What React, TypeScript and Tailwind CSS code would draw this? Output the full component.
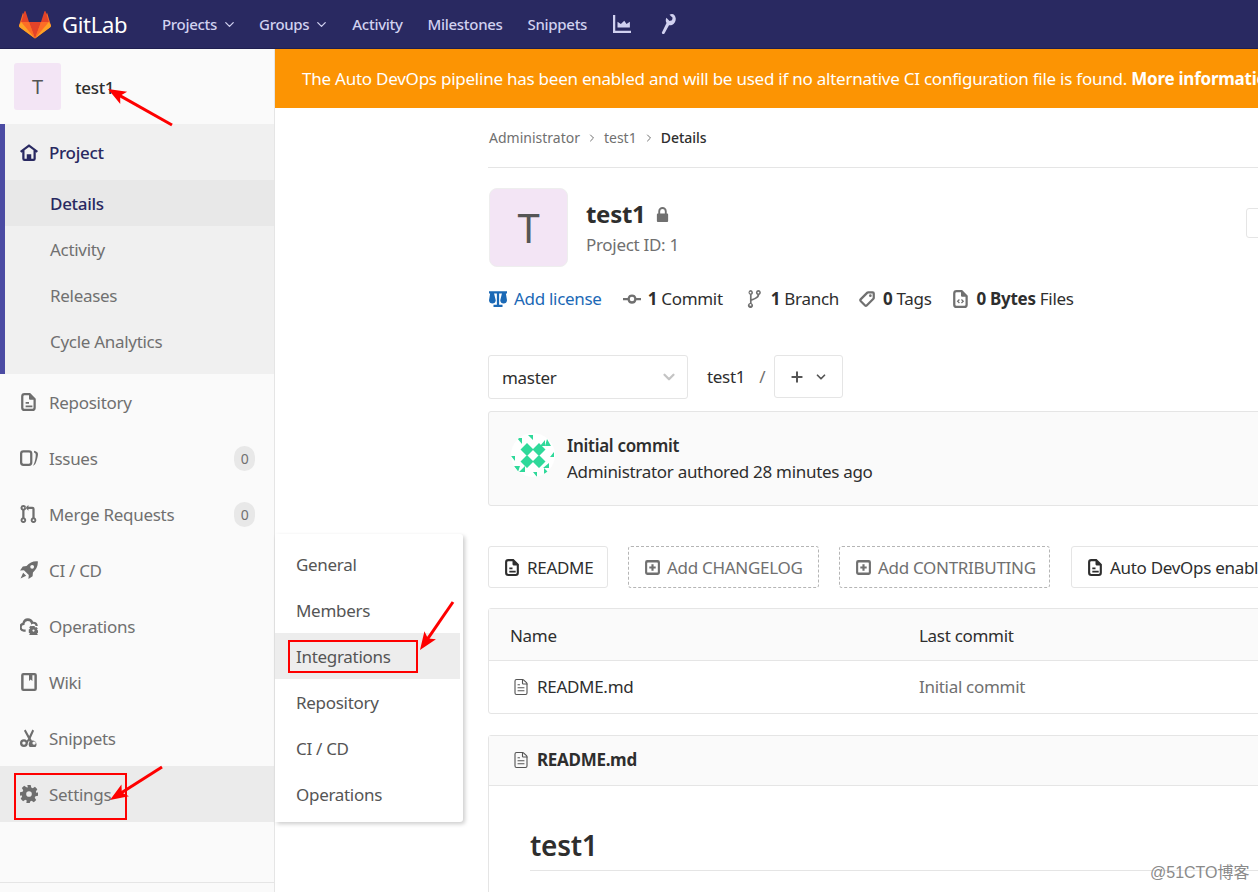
import { ReactNode } from 'react'
import { ChevronDown, ChevronRight, FileText, Plus } from 'lucide-react'

const font = "font-['Noto_Sans','Open_Sans',sans-serif]"

function Icon({ size = 16, className = '', children }: { size?: number; className?: string; children: ReactNode }) {
  return (
    <svg width={size} height={size} viewBox="0 0 16 16" fill="currentColor" fillRule="evenodd" className={`shrink-0 ${className}`}>
      {children}
    </svg>
  )
}

const DocIcon = () => (
  <path d="M4 0h5l5 5v8a3 3 0 0 1-3 3H4a3 3 0 0 1-3-3V3a3 3 0 0 1 3-3zm0 2a1 1 0 0 0-1 1v10a1 1 0 0 0 1 1h7a1 1 0 0 0 1-1V6H9a1 1 0 0 1-1-1V2H4zm1 6h3v1.600H5V8zm0 3h6v1.600H5V11z" />
)
const HomeIcon = () => (
  <path d="M8 1l8 6-1.200 1.600-.8-.6v6a2 2 0 0 1-2 2H4a2 2 0 0 1-2-2V8l-.8.6L0 7l8-6zM4 6.500V14h2v-4h4v4h2V6.500L8 3.500l-4 3z" />
)
const IssuesIcon = () => (
  <path d="M3 1h5a3 3 0 0 1 3 3v8a3 3 0 0 1-3 3H3a3 3 0 0 1-3-3V4a3 3 0 0 1 3-3zm0 2a1 1 0 0 0-1 1v8a1 1 0 0 0 1 1h5a1 1 0 0 0 1-1V4a1 1 0 0 0-1-1H3zm9.500-1.400c2 .3 3.500 1.400 3.500 2.900 0 2-1 5.500-2 8-.5 1.300-1.500 2-2.500 2.500.5-1 1-2 1.500-3.500.6-2 1-4.500 1-6.500 0-.8-.5-1.400-1.500-1.800V1.600z" />
)
const MergeIcon = () => (
  <path d="M3 0a2.500 2.500 0 0 1 1 4.800v6.400a2.500 2.500 0 1 1-2 0V4.800A2.500 2.500 0 0 1 3 0zm0 1.700a.8.8 0 1 0 0 1.600.8.8 0 0 0 0-1.600zm0 11a.8.800 0 1 0 0 1.600.8.8 0 0 0 0-1.600zM7.500 0v1.500H11a2 2 0 0 1 2 2v7.700a2.500 2.500 0 1 1-2 0V3.500H7.500V5L4.800 2.500 7.500 0zM12 12.700a.8.8 0 1 0 0 1.600.8.8 0 0 0 0-1.600z" />
)
const RocketIcon = () => (
  <path d="M15.800.2c.4 4-1.300 7.400-4.300 10l-.3 3.300L7.500 16l.3-3.500L3.500 8.200 0 8.500 2.500 4.800l3.300-.3C8.400 1.500 11.800-.2 15.800.2zM10.800 3.500a1.700 1.700 0 1 0 0 3.400 1.700 1.700 0 0 0 0-3.400zM2.800 10.500l2.700 2.700L.5 15.500l2.300-5z" />
)
const CloudGearIcon = () => (
  <path d="M7 1a5 5 0 0 1 4.700 3.300A4 4 0 0 1 15.800 8h-2a2 2 0 0 0-3-1.700L10 6.800l-.2-1A3 3 0 0 0 4 6v1h-.5a2 2 0 0 0 0 4H5v2H3.500a4 4 0 0 1-1.300-7.800A5 5 0 0 1 7 1zm4 7h2l.3 1.300 1.200-.5 1.300 1.400-.7 1.200 1.100.6v1.900l-1.100.5.700 1.200-1.300 1.400-1.200-.6-.3 1.100h-2l-.3-1.100-1.200.6-1.300-1.400.7-1.200-1.100-.5V11l1.100-.6-.7-1.200 1.300-1.400 1.200.5L11 8zm1 3a1 1 0 1 0 0 2 1 1 0 0 0 0-2z" />
)
const WikiIcon = () => (
  <path d="M3 0h10a2 2 0 0 1 2 2v12a2 2 0 0 1-2 2H3a2 2 0 0 1-2-2V2a2 2 0 0 1 2-2zm.200 2v12h9.600V2H11v5L9.500 5.800 8 7V2H3.200z" />
)
const ScissorsIcon = () => (
  <path d="M3.500 9a3.500 3.500 0 0 1 2.600 1.200l1.200-1.500L3.500 1.500 5 .5l3.200 5.800L11 .5l1.500 1-3 6.800 1 1.900a3.500 3.500 0 1 1-2 1.200L8 10.300 7 12.500A3.500 3.500 0 1 1 3.500 9zm0 2a1.500 1.500 0 1 0 0 3 1.500 1.500 0 0 0 0-3zm9 0a1.500 1.500 0 1 0 0 3 1.500 1.500 0 0 0 0-3z" />
)
const GearIcon = () => (
  <path d="M6.500 0h3l.5 2.300 1.300.6 2-1.300 2.100 2.100-1.300 2 .6 1.300L16 6.500v3l-2.300.5-.6 1.300 1.300 2-2.100 2.100-2-1.300-1.300.6-.5 2.300h-3L6 13.700l-1.300-.6-2 1.300-2.100-2.100 1.300-2-.6-1.300L0 9.500v-3l2.300-.5.6-1.300-1.300-2L3.700.6l2 1.300L7 2.300 6.500 0zM8 5.500a2.500 2.500 0 1 0 0 5 2.500 2.500 0 0 0 0-5z" />
)
const LockIcon = () => (
  <path d="M8 0a4.500 4.500 0 0 1 4.500 4.500V7h.5a1 1 0 0 1 1 1v7a1 1 0 0 1-1 1H3a1 1 0 0 1-1-1V8a1 1 0 0 1 1-1h.5V4.500A4.500 4.500 0 0 1 8 0zm0 2a2.500 2.500 0 0 0-2.500 2.500V7h5V4.500A2.500 2.500 0 0 0 8 2z" />
)
const ScaleIcon = () => (
  <path d="M0 1h16v2h-1l1 6c0 1.700-1.300 3-3 3s-3-1.300-3-3l1.500-6H9v10h3v2H4v-2h3V3H4.500L6 9c0 1.700-1.300 3-3 3S0 10.700 0 9l1-6H0V1z" />
)
const CommitIcon = () => (
  <path d="M8 4a4 4 0 0 1 3.900 3H16v2h-4.100a4 4 0 0 1-7.800 0H0V7h4.100A4 4 0 0 1 8 4zm0 2a2 2 0 1 0 0 4 2 2 0 0 0 0-4z" />
)
const BranchIcon = () => (
  <path d="M4 0a2.300 2.300 0 0 1 1 4.300v7.400a2.300 2.300 0 1 1-1.500-.2V4.300A2.300 2.300 0 0 1 4 0zm0 1.500a.8.8 0 1 0 0 1.600.8.8 0 0 0 0-1.600zm0 11a.8.800 0 1 0 0 1.600.8.8 0 0 0 0-1.600zM11 0a2.300 2.300 0 0 1 .8 4.400C11.500 7 9 8 5 9.500V8c3-1 4.800-1.900 5.200-3.600A2.300 2.300 0 0 1 11 0zm0 1.500a.8.8 0 1 0 0 1.600.8.8 0 0 0 0-1.600z" />
)
const TagIcon = () => (
  <path d="M9 1h4a2 2 0 0 1 2 2v4a2 2 0 0 1-.6 1.400l-6 6a2 2 0 0 1-2.800 0l-4-4a2 2 0 0 1 0-2.800l6-6A2 2 0 0 1 9 1zm0 2L3 9l4 4 6-6V3H9zm2 .8a1.200 1.200 0 1 1 0 2.400 1.200 1.200 0 0 1 0-2.400z" />
)
const CodeFileIcon = () => (
  <path d="M4 0h5l5 5v8a3 3 0 0 1-3 3H4a3 3 0 0 1-3-3V3a3 3 0 0 1 3-3zm0 2a1 1 0 0 0-1 1v10a1 1 0 0 0 1 1h7a1 1 0 0 0 1-1V6H9a1 1 0 0 1-1-1V2H4zm2.200 6l.8.8L5.800 10 7 11.200l-.8.8-2-2 2-2zm2.600 0l2 2-2 2-.8-.8L9.200 10 8 8.800l.8-.8z" />
)
const PlusSquareIcon = () => (
  <path d="M3 1h10a2 2 0 0 1 2 2v10a2 2 0 0 1-2 2H3a2 2 0 0 1-2-2V3a2 2 0 0 1 2-2zm.5 2.200a.5.5 0 0 0-.5.5v8.600a.5.5 0 0 0 .5.5h9a.5.5 0 0 0 .5-.5V3.700a.5.5 0 0 0-.5-.5h-9zM7 5h2v2h2v2H9v2H7V9H5V7h2V5z" />
)
const ChartIcon = () => (
  <path d="M0 0h2v14h14v2H0V0zm4 6l3 2 3-3 2 3 3-2v5H4V6z" />
)
const WrenchIcon = () => (
  <path d="M12 0c-.7 0-1.500.2-2 .5L12.500 3l-.5 2-2 .5L7.500 3C7.200 3.500 7 4.300 7 5c0 .8.200 1.500.6 2.100L4 14.500c-.3.7 0 1.300.6 1.500.6.200 1.200 0 1.500-.7L9.600 9c.8.100 1.600 0 2.400-.3 2-.8 3.200-3 3-5.200C14.800 1.500 13.500 0 12 0z" />
)

function GitlabLogo() {
  return (
    <svg width="32" height="30" viewBox="0 0 32 30" className="shrink-0">
      <path d="M16 29.500L1 18.500.2 16 4 3.500 7.800 13h16.400L28 3.500 31.800 16l-.8 2.500z" fill="#fc6d26" />
      <path d="M16 29.500L10 13h12z" fill="#e24329" />
      <path d="M16 29.500L10 13H2.200z" fill="#fc6d26" />
      <path d="M16 29.500L22 13h7.800z" fill="#fc6d26" />
      <path d="M2.200 13L.2 16a2 2 0 0 0 .8 2.500L16 29.500z" fill="#fca326" />
      <path d="M29.800 13l2 3a2 2 0 0 1-.8 2.500L16 29.500z" fill="#fca326" />
      <path d="M2.200 13H10L6.600 2.500a.6.6 0 0 0-1.200 0z" fill="#e24329" />
      <path d="M29.800 13H22l3.400-10.500a.6.6 0 0 1 1.200 0z" fill="#e24329" />
    </svg>
  )
}

function Identicon() {
  return (
    <svg width="44" height="44" viewBox="0 0 44 44" className="shrink-0 rounded-full bg-white mb-[7px]">
      <g fill="#2fd99a">
        <path d="M16 10l6.500 6.500L16 23l-6.500-6.500zM28 10l6.500 6.500L28 23l-6.500-6.500zM16 22l6.500 6.500L16 35l-6.500-6.500zM28 22l6.500 6.500L28 35l-6.500-6.500z" />
        <path d="M17 2h5v5zM6 5h5v6zM29 13l5-6v6zM34 13l2-7 4 7zM0 23h4v5zM39 24l4-5v5zM3 33h6l-2 6zM8 39l6-6v6zM22 39l4 5v-5zM32 35l6-5v5zM33 41v-6l5 5z" />
      </g>
    </svg>
  )
}

function TopNav() {
  return (
    <header className="flex items-center h-[49px] shrink-0 bg-[#292961] border-b border-[#1f1f50]">
      <div className="flex items-center pl-[19px] w-[162px] gap-[11px]">
        <GitlabLogo />
        <span className="text-[22px] leading-none text-white">GitLab</span>
      </div>
      <nav className="flex items-center gap-[25px] text-[15px] font-medium text-[#d1d1f0]">
        <span className="flex items-center gap-[5px] mr-[-3px]">Projects <ChevronDown size={15} /></span>
        <span className="flex items-center gap-[5px] mr-[-2px]">Groups <ChevronDown size={15} /></span>
        <span>Activity</span>
        <span>Milestones</span>
        <span>Snippets</span>
        <Icon size={18} className="ml-[1px]"><ChartIcon /></Icon>
        <Icon size={20} className="ml-[1px]"><WrenchIcon /></Icon>
      </nav>
    </header>
  )
}

function SideItem({ icon, label, count, active }: { icon: ReactNode; label: string; count?: number; active?: boolean }) {
  return (
    <div className={`flex items-center h-14 pl-[20px] pr-[19px] gap-[11px] text-[#707070] ${active ? 'bg-[#ebebeb]' : ''}`}>
      <Icon size={18} className="text-[#6e6e6e]">{icon}</Icon>
      <span className="flex-1 text-[17px] pt-[2px]">{label}</span>
      {count !== undefined && (
        <span className="w-[21px] h-[25px] rounded-full bg-[#e8e8e8] text-[14px] flex items-center justify-center text-[#707070]">
          {count}
        </span>
      )}
    </div>
  )
}

function Sidebar() {
  return (
    <aside className="flex flex-col w-[275px] shrink-0 bg-[#fafafa] border-r border-[#e5e5e5]">
      <div className="flex items-center h-[75px] pl-[14px] gap-[14px]">
        <div className="w-[47px] h-[47px] rounded-[3px] bg-[#f3e5f5] flex items-center justify-center text-[20px] text-[#555]">T</div>
        <span className="text-[17px] font-medium text-[#2e2e2e] pt-[2px]">test1</span>
      </div>
      <div className="border-l-[5px] border-[#4b4ba3] bg-[#f0f0f0] h-[250px]">
        <div className="flex items-center h-14 pl-[15px] gap-[11px] text-[#292961]">
          <Icon size={18}><HomeIcon /></Icon>
          <span className="text-[17px] font-medium pt-[2px]">Project</span>
        </div>
        <div className="flex items-center h-[46px] pl-[45px] pt-[2px] bg-[#e8e8e8] text-[17px] font-medium text-[#292961]">Details</div>
        {['Activity', 'Releases', 'Cycle Analytics'].map(label => (
          <div key={label} className="flex items-center h-[46px] pl-[45px] pt-[2px] text-[17px] text-[#707070]">{label}</div>
        ))}
      </div>
      <SideItem icon={<DocIcon />} label="Repository" />
      <SideItem icon={<IssuesIcon />} label="Issues" count={0} />
      <SideItem icon={<MergeIcon />} label="Merge Requests" count={0} />
      <SideItem icon={<RocketIcon />} label="CI / CD" />
      <SideItem icon={<CloudGearIcon />} label="Operations" />
      <SideItem icon={<WikiIcon />} label="Wiki" />
      <SideItem icon={<ScissorsIcon />} label="Snippets" />
      <SideItem icon={<GearIcon />} label="Settings" active />
      <div className="mt-[60px] border-t border-[#e5e5e5] flex-1" />
    </aside>
  )
}

function Stat({ icon, bold, label, className = '' }: { icon: ReactNode; bold: string; label: string; className?: string }) {
  return (
    <span className={`flex items-center gap-[7px] ${className}`}>
      <Icon size={18} className="text-[#707070]">{icon}</Icon>
      <span className="text-[17px] text-[#2e2e2e]"><b className="font-bold">{bold}</b> {label}</span>
    </span>
  )
}

function FileButton({ label, dashed, className = '' }: { label: string; dashed?: boolean; className?: string }) {
  return (
    <div className={`flex items-center h-[42px] px-[15px] gap-[6px] rounded-[3px] text-[17px] whitespace-nowrap ${dashed ? 'border border-dashed border-[#b5b5b5] text-[#707070]' : 'border border-[#e5e5e5] text-[#2e2e2e]'} ${className}`}>
      <Icon size={17} className={dashed ? 'text-[#707070]' : 'text-[#2e2e2e]'}>{dashed ? <PlusSquareIcon /> : <DocIcon />}</Icon>
      <span className="pt-[1px]">{label}</span>
    </div>
  )
}

function Main() {
  return (
    <main className="flex-1 min-w-0 overflow-hidden bg-white">
      <div className="h-[59px] bg-[#fc9403] flex items-center pl-[27px] text-[17px] tracking-[-0.24px] text-white whitespace-nowrap">
        The Auto DevOps pipeline has been enabled and will be used if no alternative CI configuration file is found.&nbsp;<b className="font-bold">More information</b>
      </div>
      <div className="ml-[213px] w-[1000px]">
        <div className="flex items-center h-[60px] pl-[1px] text-[14px] tracking-normal text-[#707070] border-b border-[#e5e5e5]">
          <span>Administrator</span>
          <ChevronRight size={12} className="mx-[6px]" />
          <span>test1</span>
          <ChevronRight size={12} className="mx-[6px]" />
          <span className="font-medium text-[#2e2e2e]">Details</span>
        </div>

        <div className="relative flex items-start mt-[20px] pl-[1px] gap-[18px]">
          <div className="w-[79px] h-[79px] rounded-[8px] bg-[#f3e5f5] border border-[#eeeeee] flex items-center justify-center text-[40px] text-[#555]">T</div>
          <div>
            <div className="flex items-center gap-[10px] h-[52px]">
              <span className="text-[24px] font-bold text-[#2e2e2e]">test1</span>
              <Icon size={15} className="text-[#707070]"><LockIcon /></Icon>
            </div>
            <div className="text-[17px] text-[#707070] -mt-[8px]">Project ID: 1</div>
          </div>
          <div className="absolute left-[758px] top-[20px] w-[100px] h-[30px] rounded-[3px] border border-[#e5e5e5]" />
        </div>

        <div className="flex items-center mt-[18px] pl-[1px] h-[28px] whitespace-nowrap">
          <span className="flex items-center gap-[7px] text-[17px] text-[#1b69b6]">
            <Icon size={18}><ScaleIcon /></Icon>Add license
          </span>
          <Stat icon={<CommitIcon />} bold="1" label="Commit" className="ml-[21px]" />
          <Stat icon={<BranchIcon />} bold="1" label="Branch" className="ml-[23px]" />
          <Stat icon={<TagIcon />} bold="0" label="Tags" className="ml-[19px]" />
          <Stat icon={<CodeFileIcon />} bold="0 Bytes" label="Files" className="ml-[20px]" />
        </div>

        <div className="flex items-start mt-[42px] whitespace-nowrap">
          <div className="flex items-center justify-between w-[200px] h-[44px] pl-[13px] pr-[9px] rounded-[3px] border border-[#e5e5e5] text-[17px] text-[#2e2e2e]">
            <span className="pt-[2px]">master</span>
            <ChevronDown size={18} strokeWidth={3} className="text-[#c4c4c4]" />
          </div>
          <div className="flex items-center h-[43px] pl-[19px] text-[17px] text-[#2e2e2e]">test1</div>
          <div className="flex items-center h-[43px] pl-[14px] pr-[9px] text-[17px] text-[#707070]">/</div>
          <div className="flex items-center justify-between w-[69px] h-[43px] px-[14px] rounded-[3px] border border-[#e5e5e5] text-[#555]">
            <Plus size={16} strokeWidth={3} />
            <ChevronDown size={14} strokeWidth={3} />
          </div>
        </div>

        <div className="flex items-center gap-[12px] h-[95px] mt-[12px] pl-[22px] rounded-[3px] border border-[#e5e5e5] bg-[#fafafa] text-[17px] text-[#2e2e2e]">
          <Identicon />
          <div className="leading-[26px]">
            <div className="font-semibold">Initial commit</div>
            <div>Administrator authored 28 minutes ago</div>
          </div>
        </div>

        <div className="flex items-center gap-[20px] mt-[40px]">
          <FileButton label="README" className="w-[120px]" />
          <FileButton label="Add CHANGELOG" dashed className="w-[191px]" />
          <FileButton label="Add CONTRIBUTING" dashed className="w-[211px]" />
          <FileButton label="Auto DevOps enabled" className="ml-px" />
        </div>

        <div className="mt-[20px] rounded-[3px] border border-[#e5e5e5] text-[17px]">
          <div className="flex items-center h-[52px] pt-[2px] bg-[#fafafa] border-b border-[#e5e5e5] text-[#2e2e2e]">
            <span className="w-[430px] pl-[21px]">Name</span>
            <span>Last commit</span>
          </div>
          <div className="flex items-center h-[52px]">
            <span className="flex items-center gap-[7px] w-[430px] pl-[23px] text-[#2e2e2e]">
              <FileText size={18} strokeWidth={1.5} className="text-[#555]" />README.md
            </span>
            <span className="text-[#707070]">Initial commit</span>
          </div>
        </div>

        <div className="mt-[21px] rounded-[3px] border border-[#e5e5e5] pb-[100px]">
          <div className="flex items-center gap-[7px] h-[50px] pl-[23px] pb-[2px] bg-[#fafafa] border-b border-[#e5e5e5] text-[17px] font-bold text-[#2e2e2e]">
            <FileText size={18} strokeWidth={1.5} className="text-[#555]" />README.md
          </div>
          <div className="pl-[41px] pt-[39px]">
            <h1 className="text-[28px] font-semibold leading-[40px] pb-[5px] border-b border-[#e5e5e5] text-[#2e2e2e]">test1</h1>
          </div>
        </div>
      </div>
    </main>
  )
}

function Flyout() {
  return (
    <div className="absolute left-[275px] top-[534px] w-[188px] h-[288px] bg-white rounded-r-[3px] shadow-[2px_2px_4px_rgba(0,0,0,0.2)] text-[17px] text-[#555] pt-[7px]">
      {['General', 'Members', 'Integrations', 'Repository', 'CI / CD', 'Operations'].map(label => (
        <div key={label} className={`flex items-center h-[46px] pl-[21px] pt-[2px] mr-[3px] ${label === 'Integrations' ? 'bg-[#ededed]' : ''}`}>
          {label}
        </div>
      ))}
    </div>
  )
}

function Arrow({ x1, y1, x2, y2 }: { x1: number; y1: number; x2: number; y2: number }) {
  const a = Math.atan2(y2 - y1, x2 - x1)
  const px = (len: number, off: number) =>
    `${x2 - len * Math.cos(a) - off * Math.sin(a)},${y2 - len * Math.sin(a) + off * Math.cos(a)}`
  return (
    <g>
      <line x1={x1} y1={y1} x2={x2 - 8 * Math.cos(a)} y2={y2 - 8 * Math.sin(a)} stroke="#fe0000" strokeWidth="3" />
      <polygon points={`${x2},${y2} ${px(18, 7)} ${px(14, 0)} ${px(18, -7)}`} fill="#fe0000" />
    </g>
  )
}

function Annotations() {
  return (
    <>
      <div className="absolute left-[288px] top-[640px] w-[130px] h-[33px] border-2 border-[#fe0000]" />
      <div className="absolute left-[14px] top-[773px] w-[113px] h-[47px] border-2 border-[#fe0000]" />
      <svg width="1258" height="892" className="absolute left-0 top-0 pointer-events-none">
        <Arrow x1={172} y1={125} x2={108} y2={89} />
        <Arrow x1={453} y1={602} x2={420} y2={650} />
        <Arrow x1={162} y1={767} x2={110} y2={800} />
      </svg>
      <span className="absolute left-[1150px] top-[861px] text-[16px] leading-[24px] tracking-normal text-[#8a8a8a] font-['Liberation_Sans','Noto_Sans_CJK_SC',sans-serif]">
        @51CTO博客
      </span>
    </>
  )
}

export default function App() {
  return (
    <div className={`relative flex flex-col w-[1258px] h-[892px] overflow-hidden bg-white tracking-[-0.3px] ${font}`}>
      <TopNav />
      <div className="flex flex-1 min-h-0">
        <Sidebar />
        <Main />
      </div>
      <Flyout />
      <Annotations />
    </div>
  )
}
